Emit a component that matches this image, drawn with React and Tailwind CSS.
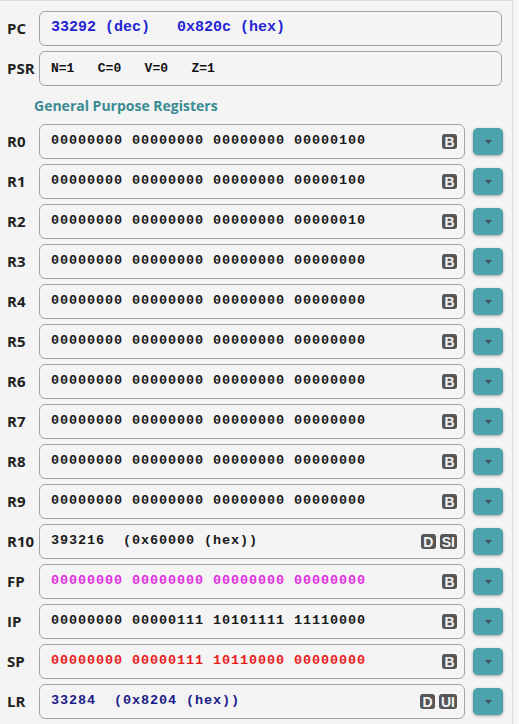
import React from 'react';

const mono = { fontFamily: '"Liberation Mono", "Courier New", monospace' };

// Registers shown in the list
const registers = [
  { name: 'R0', value: '00000000 00000000 00000000 00000100', color: 'text-[#1a1a1a]', badges: ['B'] },
  { name: 'R1', value: '00000000 00000000 00000000 00000100', color: 'text-[#1a1a1a]', badges: ['B'] },
  { name: 'R2', value: '00000000 00000000 00000000 00000010', color: 'text-[#1a1a1a]', badges: ['B'] },
  { name: 'R3', value: '00000000 00000000 00000000 00000000', color: 'text-[#1a1a1a]', badges: ['B'] },
  { name: 'R4', value: '00000000 00000000 00000000 00000000', color: 'text-[#1a1a1a]', badges: ['B'] },
  { name: 'R5', value: '00000000 00000000 00000000 00000000', color: 'text-[#1a1a1a]', badges: ['B'] },
  { name: 'R6', value: '00000000 00000000 00000000 00000000', color: 'text-[#1a1a1a]', badges: ['B'] },
  { name: 'R7', value: '00000000 00000000 00000000 00000000', color: 'text-[#1a1a1a]', badges: ['B'] },
  { name: 'R8', value: '00000000 00000000 00000000 00000000', color: 'text-[#1a1a1a]', badges: ['B'] },
  { name: 'R9', value: '00000000 00000000 00000000 00000000', color: 'text-[#1a1a1a]', badges: ['B'] },
  { name: 'R10', value: '393216  (0x60000 (hex))', color: 'text-[#1a1a1a]', badges: ['D', 'SI'] },
  { name: 'FP', value: '00000000 00000000 00000000 00000000', color: 'text-[#e22ee2]', badges: ['B'] },
  { name: 'IP', value: '00000000 00000111 10101111 11110000', color: 'text-[#1a1a1a]', badges: ['B'] },
  { name: 'SP', value: '00000000 00000111 10110000 00000000', color: 'text-[#e81c1c]', badges: ['B'] },
  { name: 'LR', value: '33284  (0x8204 (hex))', color: 'text-[#1c1c8a]', badges: ['D', 'UI'] },
];

function Label({ children }) {
  return (
    <div className="w-[39px] shrink-0 pl-[7px] text-[15px] font-bold text-[#222] leading-none">
      {children}
    </div>
  );
}

function Badge({ text }) {
  return (
    <span className="inline-flex h-[15px] min-w-[15px] items-center justify-center rounded-[3px] bg-[#555] px-[2px] text-[14px] font-bold leading-none text-[#f4f4f4]" style={{ fontFamily: '"Liberation Sans", Arial, sans-serif' }}>
      {text}
    </span>
  );
}

function DropButton() {
  return (
    <button className="ml-[8px] flex h-[27px] w-[30px] shrink-0 items-center justify-center rounded-[5px] bg-[#4ca3ad] shadow-[0_1px_3px_rgba(0,0,0,0.35)]">
      <svg width="7" height="4" viewBox="0 0 7 4">
        <path d="M0 0 L7 0 L3.5 4 Z" fill="#46525c" />
      </svg>
    </button>
  );
}

export default function App() {
  return (
    <div className="h-[724px] w-[519px] bg-[#f4f4f4]" style={{ fontFamily: '"Open Sans", "Noto Sans", sans-serif' }}>
      <div className="h-full w-[513px] border-r border-t border-[#dcdcdc] pt-[10px]">
        {/* PC row */}
        <div className="flex items-center">
          <Label>PC</Label>
          <div className="flex h-[35px] w-[463px] items-center rounded-[6px] border border-[#a3a3a3] pl-[11px] text-[15px] font-bold text-[#2424d4] whitespace-pre" style={mono}>
            33292 (dec)   0x820c (hex)
          </div>
        </div>

        {/* PSR row */}
        <div className="mt-[5px] flex items-center">
          <Label>PSR</Label>
          <div className="flex h-[35px] w-[463px] items-center rounded-[6px] border border-[#a3a3a3] pl-[11px] text-[13px] font-bold text-[#111] whitespace-pre" style={mono}>
            N=1   C=0   V=0   Z=1
          </div>
        </div>

        <div className="flex h-[38px] items-center pl-[34px] text-[14px] font-bold text-[#3b8b93]">
          General Purpose Registers
        </div>

        {/* General purpose registers */}
        <div className="flex flex-col gap-[5px]">
          {registers.map((r) => (
            <div key={r.name} className="flex items-center">
              <Label>{r.name}</Label>
              <div className={`flex h-[35px] w-[426px] items-center rounded-[6px] border border-[#a3a3a3] pl-[11px] pr-[7px] text-[13.5px] font-bold whitespace-pre ${r.color}`}>
                <span className="flex-1 tracking-[0.9px]" style={mono}>{r.value}</span>
                <span className="flex gap-[4px]">
                  {r.badges.map((b) => <Badge key={b} text={b} />)}
                </span>
              </div>
              <DropButton />
            </div>
          ))}
        </div>
      </div>
    </div>
  );
}
